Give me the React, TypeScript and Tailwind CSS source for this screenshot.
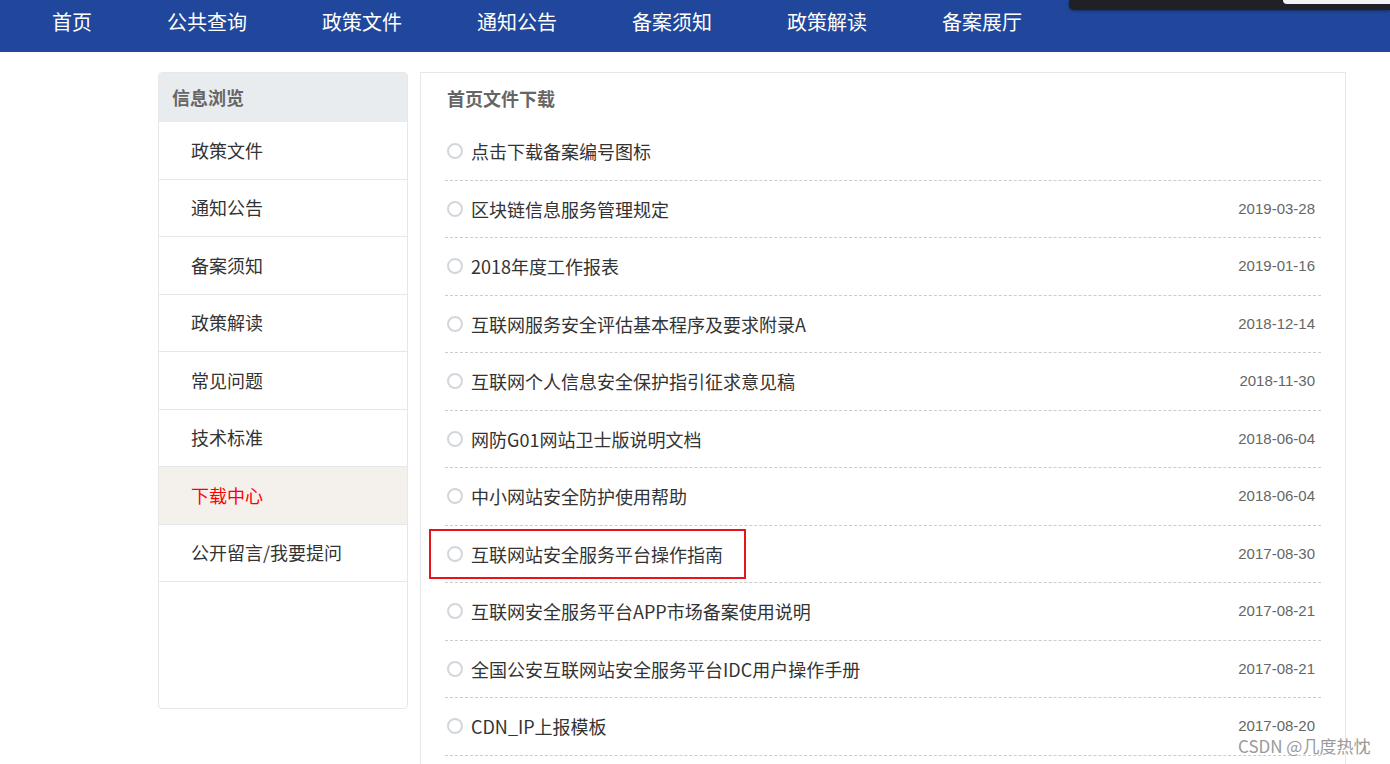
import React from 'react';

const navItems = ['首页', '公共查询', '政策文件', '通知公告', '备案须知', '政策解读', '备案展厅'];

const sideItems = ['政策文件', '通知公告', '备案须知', '政策解读', '常见问题', '技术标准', '下载中心', '公开留言/我要提问'];

const files = [
  { title: '点击下载备案编号图标', date: '' },
  { title: '区块链信息服务管理规定', date: '2019-03-28' },
  { title: '2018年度工作报表', date: '2019-01-16' },
  { title: '互联网服务安全评估基本程序及要求附录A', date: '2018-12-14' },
  { title: '互联网个人信息安全保护指引征求意见稿', date: '2018-11-30' },
  { title: '网防G01网站卫士版说明文档', date: '2018-06-04' },
  { title: '中小网站安全防护使用帮助', date: '2018-06-04' },
  { title: '互联网站安全服务平台操作指南', date: '2017-08-30', marked: true },
  { title: '互联网安全服务平台APP市场备案使用说明', date: '2017-08-21' },
  { title: '全国公安互联网站安全服务平台IDC用户操作手册', date: '2017-08-21' },
  { title: 'CDN_IP上报模板', date: '2017-08-20' },
];

const cjk = "font-['Microsoft_YaHei','Noto_Sans_CJK_SC',sans-serif]";

export default function App() {
  return (
    <div className={`relative min-h-[764px] bg-white ${cjk}`}>
      {/* top nav */}
      <div className="h-[52px] bg-[#20479b] pl-[52px] flex gap-[75px] pt-[9px]">
        {navItems.map((n) => (
          <span key={n} className="text-white text-[20px] leading-[26px]">
            {n}
          </span>
        ))}
      </div>

      {/* browser overlay at the top */}
      <div className="absolute top-0 right-0 w-[321px] h-[10px] bg-[#202124] rounded-bl-[5px] shadow-[0_1px_3px_rgba(0,0,0,0.4)]">
        <div className="absolute top-0 right-0 w-[107px] h-[4px] bg-[#f1f3f4] rounded-bl-[4px]" />
      </div>

      <div className="flex gap-[12px] pl-[158px] pt-[20px]">
        {/* sidebar */}
        <div className="w-[250px] h-[637px] border border-[#e3e8eb] rounded-[4px] shrink-0">
          <div className="h-[49px] bg-[#e8ecef] rounded-t-[4px] flex items-center pl-[13px] text-[18px] font-bold text-[#666]">
            信息浏览
          </div>
          {sideItems.map((s) => {
            const active = s === '下载中心';
            return (
              <div
                key={s}
                className={`h-[57.5px] border-b border-[#e3e8eb] flex items-center pl-[32px] text-[18px] ${
                  active ? 'bg-[#f4f1ed] text-[#ff0000]' : 'text-[#333]'
                }`}
              >
                {s}
              </div>
            );
          })}
        </div>

        {/* file list */}
        <div className="w-[926px] min-h-[700px] border border-[#e3e8eb] border-b-0 px-[24px]">
          <div className="h-[50px] flex items-center pl-[2px] text-[18px] font-bold text-[#666]">
            首页文件下载
          </div>
          {files.map((f) => (
            <div
              key={f.title}
              className="relative h-[57.5px] border-b border-dashed border-[#cccccc] flex items-center pl-[2px] pr-[6px]"
            >
              <span className="w-[16px] h-[16px] rounded-full border-2 border-[#d3d7db] shrink-0" />
              <span className="ml-[8px] text-[18px] text-[#333] leading-[24px]">{f.title}</span>
              <span className="ml-auto font-['Liberation_Sans',Arial,sans-serif] text-[15px] text-[#666]">
                {f.date}
              </span>
              {f.marked && (
                <div className="absolute left-[-16px] top-[3px] w-[317px] h-[50px] border-2 border-[#e8141b]" />
              )}
            </div>
          ))}
        </div>
      </div>

      {/* watermark */}
      <div className="absolute left-[1238px] top-[734px] text-[17px] text-[#9a9a9a] [text-shadow:0_0_2px_#fff] leading-[24px]">
        CSDN @几度热忱
      </div>
    </div>
  );
}
